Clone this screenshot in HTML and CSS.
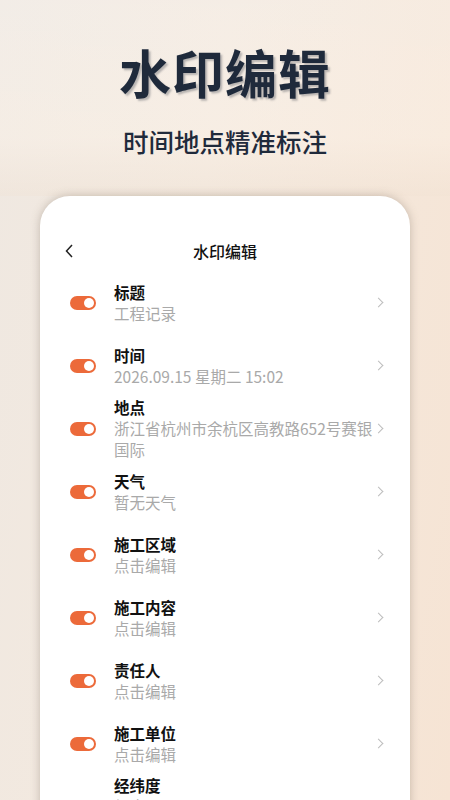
FILE: index.html
```html
<!DOCTYPE html>
<html>
<head>
    <meta charset="utf-8">
    <link rel="stylesheet" href="styles.css">
    <title>水印编辑</title>
</head>
<body>
    <div class="hero">
        <h1 class="hero-title">水印编辑</h1>
        <p class="hero-sub">时间地点精准标注</p>
    </div>

    <div class="card">
        <!-- page header -->
        <div class="header">
            <svg class="back" width="8" height="14" viewBox="0 0 8 14">
                <path d="M7 1 L1.5 7 L7 13" fill="none" stroke="#222" stroke-width="1.5"/>
            </svg>
            <span class="header-title">水印编辑</span>
        </div>

        <div class="list">
            <div class="row">
                <span class="toggle"></span>
                <div class="text">
                    <div class="label">标题</div>
                    <div class="value">工程记录</div>
                </div>
                <span class="arrow"></span>
            </div>
            <div class="row">
                <span class="toggle"></span>
                <div class="text">
                    <div class="label">时间</div>
                    <div class="value">2026.09.15 星期二 15:02</div>
                </div>
                <span class="arrow"></span>
            </div>
            <div class="row">
                <span class="toggle"></span>
                <div class="text">
                    <div class="label">地点</div>
                    <div class="value">浙江省杭州市余杭区高教路652号赛银国际</div>
                </div>
                <span class="arrow"></span>
            </div>
            <div class="row">
                <span class="toggle"></span>
                <div class="text">
                    <div class="label">天气</div>
                    <div class="value">暂无天气</div>
                </div>
                <span class="arrow"></span>
            </div>
            <div class="row">
                <span class="toggle"></span>
                <div class="text">
                    <div class="label">施工区域</div>
                    <div class="value">点击编辑</div>
                </div>
                <span class="arrow"></span>
            </div>
            <div class="row">
                <span class="toggle"></span>
                <div class="text">
                    <div class="label">施工内容</div>
                    <div class="value">点击编辑</div>
                </div>
                <span class="arrow"></span>
            </div>
            <div class="row">
                <span class="toggle"></span>
                <div class="text">
                    <div class="label">责任人</div>
                    <div class="value">点击编辑</div>
                </div>
                <span class="arrow"></span>
            </div>
            <div class="row">
                <span class="toggle"></span>
                <div class="text">
                    <div class="label">施工单位</div>
                    <div class="value">点击编辑</div>
                </div>
                <span class="arrow"></span>
            </div>
            <div class="row">
                <span class="toggle"></span>
                <div class="text">
                    <div class="label">经纬度</div>
                    <div class="value">经度:120.0012345<br>纬度:30.2812345</div>
                </div>
                <span class="arrow"></span>
            </div>
        </div>
    </div>
</body>
</html>
```

FILE: styles.css
```css
html, body {
    margin: 0;
    padding: 0;
}
body {
    width: 450px;
    height: 800px;
    overflow: hidden;
    font-family: "Noto Sans CJK SC", "Noto Sans", sans-serif;
    background: linear-gradient(100deg, #efe8e1 0%, #f3e9df 40%, #f6e4d4 100%);
}
.hero {
    height: 196px;
    text-align: center;
    color: #1f2a3b;
    background: linear-gradient(180deg, rgba(255,255,255,0.2) 0%, rgba(255,246,236,0.35) 70%, rgba(240,225,210,0.3) 100%);
}
.hero-title {
    margin: 0;
    padding-top: 38px;
    font-size: 52px;
    line-height: 68px;
    font-weight: 700;
    letter-spacing: 1px;
    text-shadow: 2px 2px 2px rgba(40, 45, 60, 0.3);
}
.hero-sub {
    margin: 0;
    padding-top: 18px;
    font-size: 25.5px;
    line-height: 34px;
    font-weight: 500;
}
.card {
    margin: 0 40px;
    height: 640px;
    background: #fff;
    border-radius: 30px 30px 0 0;
    box-shadow: 0 0 10px rgba(110, 95, 80, 0.35);
}
.header {
    position: relative;
    height: 75px;
    display: flex;
    align-items: flex-end;
    justify-content: center;
}
.header-title {
    font-size: 16px;
    line-height: 24px;
    font-weight: 500;
    color: #111;
    margin-bottom: 8px;
}
.back {
    position: absolute;
    left: 25px;
    bottom: 13px;
}
.row {
    height: 63px;
    display: flex;
    align-items: center;
    padding: 0 26px 0 30px;
}
.toggle {
    position: relative;
    width: 26px;
    height: 14px;
    border-radius: 7px;
    background: #ec6a3a;
    flex-shrink: 0;
}
.toggle::after {
    content: "";
    position: absolute;
    right: 2px;
    top: 2px;
    width: 10px;
    height: 10px;
    border-radius: 50%;
    background: #fff;
}
.text {
    flex: 1;
    margin-left: 18px;
    font-size: 15.5px;
    line-height: 21px;
}
.label {
    color: #111;
    font-weight: 600;
}
.value {
    color: #a9a9a9;
}
.arrow {
    width: 6px;
    height: 6px;
    border-top: 1.2px solid #bdbdbd;
    border-right: 1.2px solid #bdbdbd;
    transform: rotate(45deg);
    flex-shrink: 0;
    margin-right: 2px;
}
```
